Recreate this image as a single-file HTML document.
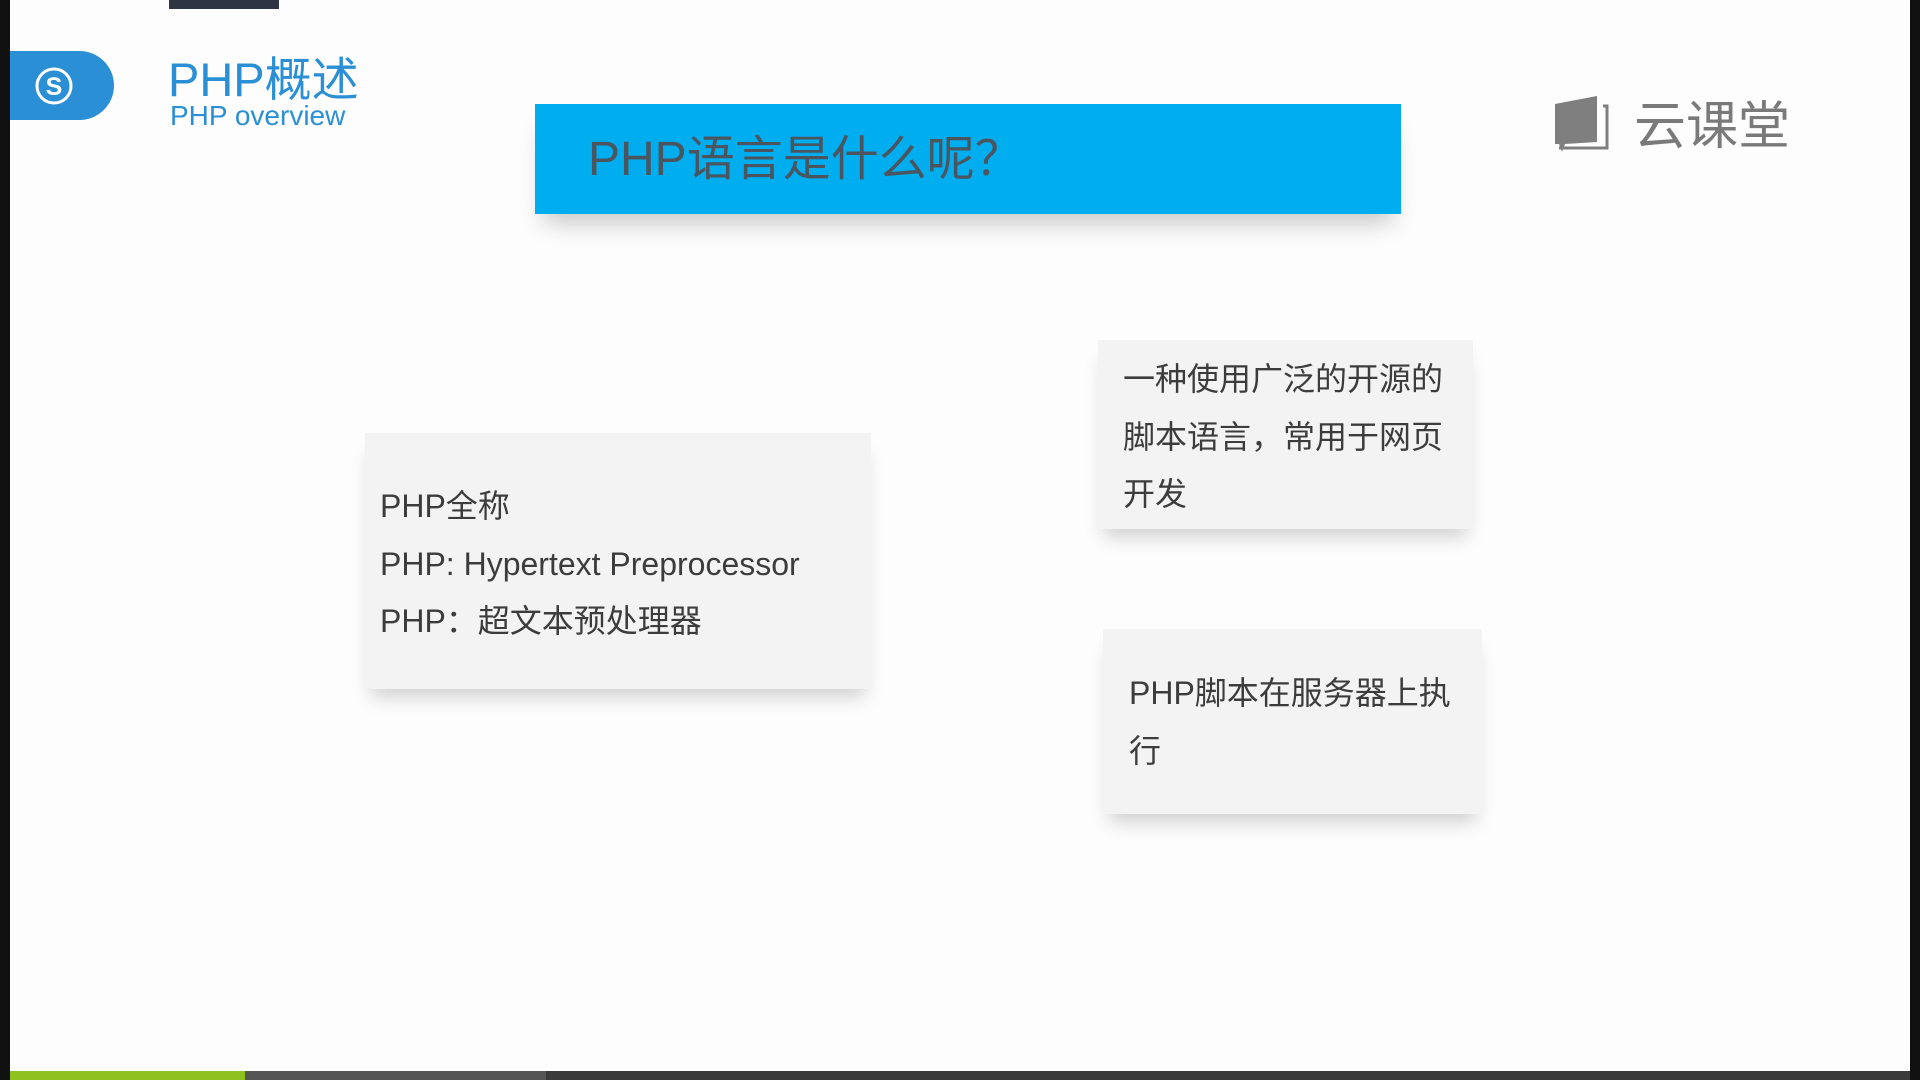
<!DOCTYPE html>
<html><head><meta charset="utf-8"><style>
*{margin:0;padding:0;box-sizing:border-box}
body{width:1920px;height:1080px;background:#fdfdfd;position:relative;overflow:hidden;font-family:"Liberation Sans","Noto Sans CJK SC",sans-serif}
.a{position:absolute}
.card{position:absolute;background:#f3f3f3;box-shadow:0 14px 18px -6px rgba(0,0,0,0.18);color:#3c3c3c;font-size:32px;line-height:57.5px}
</style></head><body>
<div class="a" style="left:0;top:0;width:10px;height:1080px;background:#111"></div>
<div class="a" style="left:1910px;top:0;width:10px;height:1080px;background:#111"></div>
<div class="a" style="left:169px;top:0;width:110px;height:9px;background:#2e3444"></div>
<div class="a" style="left:10px;top:51px;width:104px;height:69px;background:#2b8fd6;border-radius:0 35px 35px 0"></div>
<svg class="a" style="left:30px;top:63px" width="50" height="48" viewBox="0 0 50 48"><circle cx="24" cy="23" r="17" fill="none" stroke="#fff" stroke-width="3"/><text x="24" y="32" text-anchor="middle" font-family="Liberation Sans" font-weight="bold" font-size="25" fill="#fff">S</text></svg>
<div class="a" style="left:168px;top:50px;font-size:47px;color:#2b8fd6;line-height:60px">PHP概述</div>
<div class="a" style="left:170px;top:100px;font-size:28px;color:#2b8fd6;line-height:32px">PHP overview</div>
<div class="a" style="left:535px;top:104px;width:866px;height:110px;background:#00aeef;box-shadow:0 18px 22px -8px rgba(0,0,0,0.2)"></div>
<div class="a" style="left:588px;top:130px;font-size:48px;color:#4a5560;line-height:60px">PHP语言是什么呢？</div>
<svg class="a" style="left:1553px;top:92px" width="64" height="64" viewBox="0 0 64 64"><path d="M2 12 L44 4 L44 50 L12 52 L9 60 L6 52 L2 52 Z" fill="#7f7f7f"/><path d="M50 14 L54 14 L54 56 L6 56" fill="none" stroke="#7f7f7f" stroke-width="3"/></svg>
<div class="a" style="left:1634px;top:94px;font-size:52px;color:#7a7a7a;line-height:66px">云课堂</div>
<div class="card" style="left:365px;top:433px;width:506px;height:256px;padding:45px 0 0 15px">PHP全称<br>PHP: Hypertext Preprocessor<br>PHP：超文本预处理器</div>
<div class="card" style="left:1098px;top:340px;width:375px;height:189px;padding:11px 0 0 25px">一种使用广泛的开源的<br>脚本语言，常用于网页<br>开发</div>
<div class="card" style="left:1103px;top:629px;width:379px;height:185px;padding:36px 0 0 26px">PHP脚本在服务器上执<br>行</div>
<div class="a" style="left:10px;top:1071px;width:1900px;height:9px;background:#3a3a3a"></div>
<div class="a" style="left:10px;top:1071px;width:235px;height:9px;background:#8dc21f"></div>
<div class="a" style="left:245px;top:1071px;width:301px;height:9px;background:#555"></div>
</body></html>
